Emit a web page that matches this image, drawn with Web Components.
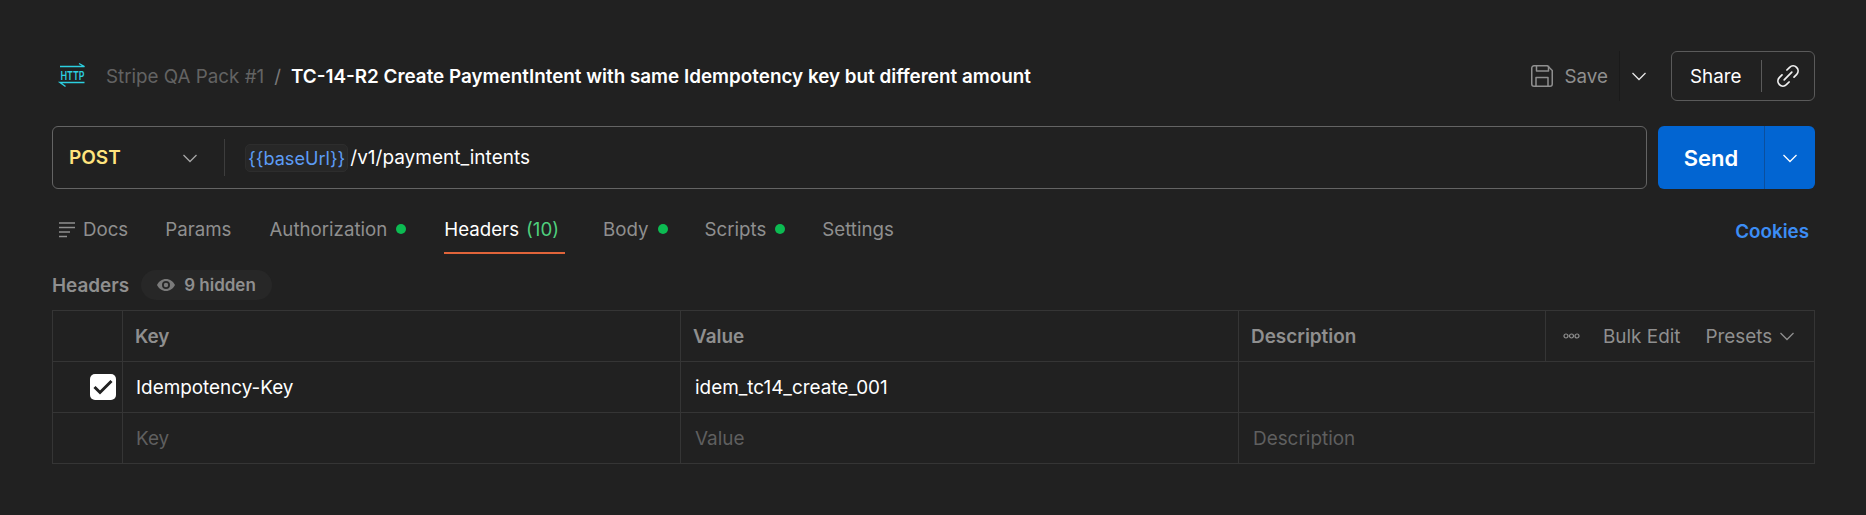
<!DOCTYPE html>
<html lang="en">
<head>
<meta charset="utf-8">
<title>TC-14-R2</title>
<style>
  html, body { margin: 0; background: #212121; }
  body {
    font: 400 19px Inter, "Liberation Sans", sans-serif;
    color: #fff;
    padding: 51px 51px 0 52px;
    height: 464px;
    overflow: hidden;
  }
</style>
</head>
<body>
<title-bar crumb="Stripe QA Pack #1" name="TC-14-R2 Create PaymentIntent with same Idempotency key but different amount"></title-bar>
<url-bar method="POST" base="{{baseUrl}}" path="/v1/payment_intents"></url-bar>
<request-tabs></request-tabs>
<headers-table hidden-count="9"></headers-table>

<script>
const chevron = () => `<svg width="14" height="14" viewBox="0 0 14 14" fill="none" stroke="currentColor" stroke-width="1.3"><path d="M.5 4 7 10.500 13.500 4"/></svg>`;

class TitleBar extends HTMLElement {
  constructor() {
    super();
    this.attachShadow({ mode: 'open' });
  }

  connectedCallback() {
    this.shadowRoot.innerHTML = `
      <style>
        :host { display: flex; align-items: center; height: 50px; margin-bottom: 25px; font-size: 18.8px; }
        .logo { margin-left: 8px; margin-right: 20px; flex: none; overflow: visible; }
        .crumb { color: #636363; }
        .sep { color: #7a7a7a; margin: 0 10px; }
        .name { font-weight: 600; color: #fff; font-size: 18.85px; }
        .spacer { flex: 1; }
        .save { display: flex; align-items: center; height: 50px; color: #8f8f8f; }
        .save svg { margin-right: 12px; }
        .caret { width: 37px; height: 50px; border-left: 1px solid #1a1a1a; margin-left: 11px; margin-right: 14px; display: flex; align-items: center; justify-content: center; color: #e6e6e6; }
        .share { display: flex; align-items: center; width: 144px; height: 50px; box-sizing: border-box; border: 1px solid #5a5a5a; border-radius: 6px; }
        .share span { padding-left: 18px; width: 71px; }
        .share i { width: 1px; height: 32px; background: #5a5a5a; }
        .share svg { margin-left: 14px; }
      </style>
      <svg class="logo" width="26" height="26" viewBox="0 0 26 26" fill="none" stroke="#2ccfe0" stroke-width="1.4">
        <path d="M0 3.500h24.500L19 .5"/>
        <path d="M24.500 19.500H0l5.500 4"/>
        <text x="0.5" y="17" font-family="Inter, sans-serif" font-size="12.4" font-weight="600" fill="#2ccfe0" stroke="none" textLength="24" lengthAdjust="spacingAndGlyphs">HTTP</text>
      </svg>
      <span class="crumb">${this.getAttribute('crumb')}</span>
      <span class="sep">/</span>
      <span class="name">${this.getAttribute('name')}</span>
      <span class="spacer"></span>
      <div class="save">
        <svg width="22" height="22" viewBox="0 0 22 22" fill="none" stroke="#8f8f8f" stroke-width="1.5" stroke-linejoin="round"><path d="M.75 3A2.250 2.250 0 0 1 3 .75h13.500L21.250 5.500V19A2.250 2.250 0 0 1 19 21.250H3A2.250 2.250 0 0 1 .75 19z"/><path d="M5.500.75V6h12V.75M5 21.250V12.500h12v8.750"/></svg>
        <span>Save</span>
      </div>
      <div class="caret">${chevron()}</div>
      <div class="share">
        <span>Share</span><i></i>
        <svg width="24" height="24" viewBox="0 0 22 22" fill="none" stroke="#f0f0f0" stroke-width="1.6" stroke-linecap="round" stroke-linejoin="round"><path d="M7.500 14.500l7-7"/><path d="M10 5.500 12.500 3A4.600 4.600 0 0 1 19 9.500L16.500 12"/><path d="M12 16.500 9.500 19A4.600 4.600 0 0 1 3 12.500L5.500 10"/></svg>
      </div>
    `;
  }
}

class UrlBar extends HTMLElement {
  constructor() {
    super();
    this.attachShadow({ mode: 'open' });
  }

  connectedCallback() {
    this.shadowRoot.innerHTML = `
      <style>
        :host { display: flex; height: 63px; gap: 11px; font-size: 19px; }
        .box { flex: 1; display: flex; align-items: center; box-sizing: border-box; border: 1px solid #646464; border-radius: 6px; }
        .method { width: 171px; box-sizing: border-box; padding: 0 27px 0 16px; display: flex; align-items: center; justify-content: space-between; font-weight: 600; color: #ffe47e; }
        .method svg { color: #a6a6a6; }
        .rule { width: 1px; height: 37px; background: #3d3d3d; margin-right: 20px; }
        .var { color: #5d9cf5; background: #272727; border: 1px solid #2d2d2d; border-radius: 5px; height: 26px; line-height: 26px; padding: 0 2px; margin-right: 2px; font-size: 18.1px; }
        .send { width: 157px; display: flex; background: #0265d2; border-radius: 6px; }
        .send b { width: 107px; box-sizing: border-box; display: flex; align-items: center; justify-content: center; font-size: 22px; font-weight: 600; border-right: 1px solid #0b4f9e; }
        .send span { flex: 1; display: flex; align-items: center; justify-content: center; }
      </style>
      <div class="box">
        <div class="method"><span>${this.getAttribute('method')}</span>${chevron()}</div>
        <div class="rule"></div>
        <span class="var">${this.getAttribute('base')}</span>
        <span>${this.getAttribute('path')}</span>
      </div>
      <div class="send"><b>Send</b><span>${chevron()}</span></div>
    `;
  }
}

class RequestTabs extends HTMLElement {
  constructor() {
    super();
    this.attachShadow({ mode: 'open' });
  }

  connectedCallback() {
    const dot = '<i class="dot"></i>';
    this.shadowRoot.innerHTML = `
      <style>
        :host { display: flex; height: 65px; font-size: 18.7px; color: #8f8f8f; }
        .tab { display: flex; align-items: center; box-sizing: border-box; height: 49px; margin-top: 16px; padding-top: 1px; border-bottom: 2px solid transparent; }
        .docs { margin-left: 7px; margin-right: 37px; }
        .docs svg { margin-right: 7px; }
        .params { margin-right: 38px; }
        .auth { margin-right: 38px; }
        .active { color: #fff; border-bottom-color: #e0643a; padding-right: 6px; margin-right: 38px; }
        .active em { font-style: normal; color: #4fcf7d; margin-left: 7px; }
        .body { margin-right: 37px; }
        .scripts { margin-right: 37px; }
        .dot { width: 10px; height: 10px; border-radius: 50%; background: #0cbb52; margin-left: 9px; }
        .cookies { margin-left: auto; margin-top: 16px; margin-right: 6px; height: 56px; line-height: 54px; font-size: 18.8px; font-weight: 600; color: #3c8df5; }
      </style>
      <div class="tab docs">
        <svg width="17" height="17" viewBox="0 0 17 17" fill="none" stroke="#8f8f8f" stroke-width="1.6"><path d="M0 2h16M0 6.500h16M0 11h11M0 15.500h8"/></svg>
        Docs
      </div>
      <div class="tab params">Params</div>
      <div class="tab auth">Authorization${dot}</div>
      <div class="tab active">Headers<em>(10)</em></div>
      <div class="tab body">Body${dot}</div>
      <div class="tab scripts">Scripts${dot}</div>
      <div class="tab">Settings</div>
      <div class="cookies">Cookies</div>
    `;
  }
}

class HeadersTable extends HTMLElement {
  constructor() {
    super();
    this.attachShadow({ mode: 'open' });
  }

  connectedCallback() {
    this.shadowRoot.innerHTML = `
      <style>
        :host { display: block; font-size: 18.9px; }
        .top { display: flex; align-items: center; height: 32px; margin: 15px 0 9px 0; color: #8f8f8f; font-weight: 600; }
        .pill { display: flex; align-items: center; height: 30px; margin-left: 12px; padding: 0 16px; border-radius: 15px; background: #272727; font-size: 17px; }
        .pill svg { margin-right: 9px; }
        .grid { display: grid; grid-template-columns: 70px 558px 558px 307px 269px; border-top: 1px solid #353535; border-left: 1px solid #353535; width: 1763px; box-sizing: border-box; }
        .c { box-sizing: border-box; height: 51px; border-right: 1px solid #353535; border-bottom: 1px solid #353535; display: flex; align-items: center; padding-left: 14px; }
        .key { padding-left: 13px; }
        .head { color: #8f8f8f; font-weight: 600; padding-left: 12px; }
        .wide { grid-column: span 2; }
        .ph { color: #5f5f5f; }
        .check { justify-content: flex-end; padding: 0 6px 0 0; }
        .box { width: 26px; height: 26px; border-radius: 5px; background: #fff; display: flex; align-items: center; justify-content: center; }
        .actions { color: #8f8f8f; padding-left: 17px; }
        .actions .bulk { margin-left: 23px; margin-right: 25px; }
        .actions svg:last-child { margin-left: 8px; }
      </style>
      <div class="top">
        <span>Headers</span>
        <div class="pill">
          <svg width="18" height="12" viewBox="0 0 18 12"><path fill="#7a7a7a" d="M9 0C5 0 1.800 2.500 0 6c1.800 3.500 5 6 9 6s7.200-2.500 9-6c-1.800-3.500-5-6-9-6zm0 10a4 4 0 1 1 0-8 4 4 0 0 1 0 8z"/><circle cx="9" cy="6" r="2.200" fill="#7a7a7a"/></svg>
          <span>${this.getAttribute('hidden-count')} hidden</span>
        </div>
      </div>
      <div class="grid">
        <div class="c"></div>
        <div class="c head">Key</div>
        <div class="c head">Value</div>
        <div class="c head">Description</div>
        <div class="c actions">
          <svg width="17" height="6" viewBox="0 0 17 6" fill="none" stroke="#8f8f8f" stroke-width="1.200"><circle cx="3" cy="3" r="2"/><circle cx="8.500" cy="3" r="2"/><circle cx="14" cy="3" r="2"/></svg>
          <span class="bulk">Bulk Edit</span>
          <span>Presets</span>
          ${chevron()}
        </div>

        <div class="c check"><div class="box"><svg width="20" height="20" viewBox="0 0 20 20" fill="none" stroke="#212121" stroke-width="3"><path d="M1.500 10 7 15.500 18.500 4"/></svg></div></div>
        <div class="c key">Idempotency-Key</div>
        <div class="c">idem_tc14_create_001</div>
        <div class="c wide"></div>

        <div class="c"></div>
        <div class="c key ph">Key</div>
        <div class="c ph">Value</div>
        <div class="c ph wide">Description</div>
      </div>
    `;
  }
}

customElements.define('title-bar', TitleBar);
customElements.define('url-bar', UrlBar);
customElements.define('request-tabs', RequestTabs);
customElements.define('headers-table', HeadersTable);
</script>
</body>
</html>
